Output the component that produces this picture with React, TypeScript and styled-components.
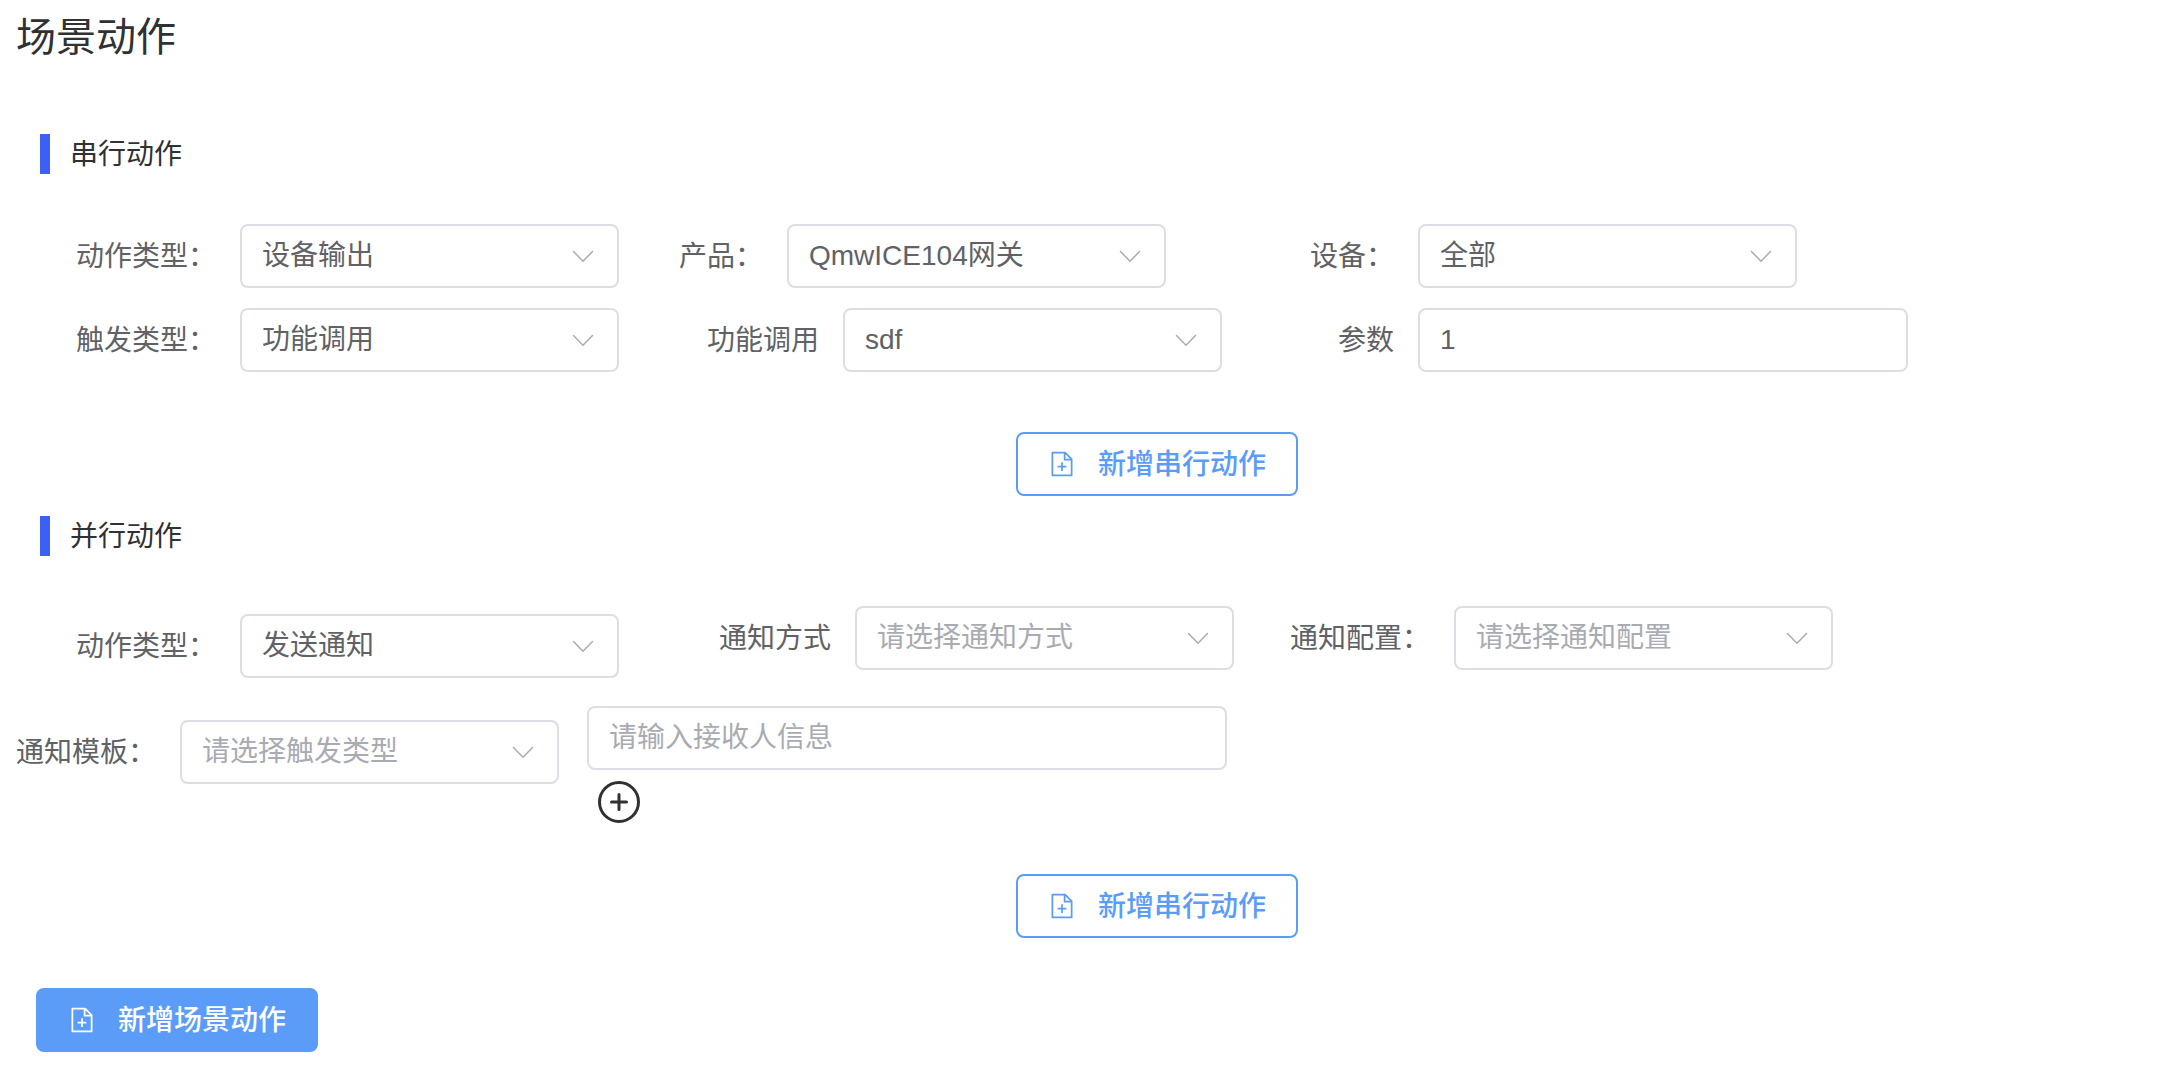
import React, { useId, useState } from 'react';
import styled, { createGlobalStyle, css } from 'styled-components';

const color = {
  heading: '#303133',
  text: '#606266',
  placeholder: '#a8abb2',
  border: '#dcdde5',
  primary: '#5b9cf8',
  marker: '#3c60f4',
};

const GlobalStyle = createGlobalStyle`
  *, *::before, *::after { box-sizing: border-box; }
  body {
    margin: 0;
    background: #fff;
    color: ${color.text};
    font-family: 'Liberation Sans', 'Noto Sans CJK SC', sans-serif;
    font-size: 28px;
    line-height: 40px;
  }
  button, input, select { font: inherit; }
`;

const Page = styled.main`
  padding: 10px 0 28px;
`;

const Title = styled.h1`
  margin: 0;
  padding-left: 16px;
  color: ${color.heading};
  font-size: 40px;
  font-weight: 400;
  line-height: 54px;
`;

const Section = styled.section<{ $top: number }>`
  padding-top: ${(p) => p.$top}px;
`;

const SectionTitle = styled.h2`
  display: flex;
  align-items: flex-start;
  gap: 20px;
  height: 40px;
  margin: 0 0 50px;
  padding-left: 40px;
  color: ${color.heading};
  font-size: 28px;
  font-weight: 400;
  line-height: 42px;

  &::before {
    content: '';
    width: 10px;
    height: 40px;
    background: ${color.marker};
  }
`;

const FieldGrid = styled.div`
  display: grid;
  grid-template-columns: 619fr 631fr 928fr;
  row-gap: 20px;
`;

const FieldRow = styled.div`
  display: flex;
  align-items: flex-start;
  gap: 28px;
  padding-top: 28px;
`;

const Field = styled.div<{ $top?: number }>`
  display: flex;
  align-items: center;
  align-self: start;
  gap: 24px;
  padding-top: ${(p) => p.$top ?? 0}px;
`;

const Label = styled.label<{ $width: number }>`
  flex: none;
  width: ${(p) => p.$width}px;
  padding-top: 2px;
  text-align: right;
  white-space: nowrap;
`;

const control = css`
  height: 64px;
  border: 2px solid ${color.border};
  border-radius: 8px;
  background: #fff;
  color: ${color.text};
  outline: none;

  &:focus-visible {
    border-color: ${color.primary};
  }
`;

const SelectBox = styled.div`
  position: relative;
  width: 379px;
`;

const NativeSelect = styled.select<{ $empty: boolean }>`
  ${control}
  appearance: none;
  display: block;
  width: 100%;
  padding: 0 60px 0 20px;
  color: ${(p) => (p.$empty ? color.placeholder : color.text)};
`;

const Arrow = styled.svg`
  position: absolute;
  top: 18px;
  right: 22px;
  width: 28px;
  height: 28px;
  color: ${color.placeholder};
  pointer-events: none;
`;

const TextInput = styled.input<{ $width: number }>`
  ${control}
  width: ${(p) => p.$width}px;
  padding: 0 20px;

  &::placeholder {
    color: ${color.placeholder};
    opacity: 1;
  }
`;

const Receivers = styled.div`
  display: flex;
  flex-direction: column;
  align-items: flex-start;
  gap: 8px;
`;

const RoundButton = styled.button`
  display: flex;
  margin-left: 8px;
  padding: 0;
  border: 0;
  background: none;
  color: ${color.heading};
  cursor: pointer;
`;

const ButtonRow = styled.div<{ $top: number }>`
  display: flex;
  justify-content: center;
  padding: ${(p) => p.$top}px 0 0 136px;
`;

const Footer = styled.footer`
  padding: 50px 0 0 36px;
`;

const ActionButton = styled.button<{ $filled?: boolean }>`
  display: inline-flex;
  align-items: center;
  gap: 22px;
  height: 64px;
  padding: 0 30px;
  border: 2px solid ${color.primary};
  border-radius: 8px;
  background: ${(p) => (p.$filled ? color.primary : '#fff')};
  color: ${(p) => (p.$filled ? '#fff' : color.primary)};
  font-weight: 500;
  white-space: nowrap;
  cursor: pointer;
`;

const ButtonText = styled.span`
  padding-top: 2px;
`;

const DocumentAddIcon = () => (
  <svg width="28" height="28" viewBox="0 0 1024 1024" fill="currentColor" aria-hidden="true">
    <path d="M832 384H576V128H192v768h640V384zm-26.496-64L640 154.496V320h165.504zM160 64h480l256 256v608a32 32 0 0 1-32 32H160a32 32 0 0 1-32-32V96a32 32 0 0 1 32-32zm320 512V448h64v128h128v64H544v128h-64V640H352v-64h128z" />
  </svg>
);

const CirclePlusIcon = () => (
  <svg width="48" height="48" viewBox="0 0 48 48" fill="none" stroke="currentColor" aria-hidden="true">
    <circle cx="24" cy="24" r="19.5" strokeWidth="3" />
    <path d="M24 16.500v15M16.500 24h15" strokeWidth="3" strokeLinecap="round" />
  </svg>
);

interface SelectFieldProps {
  label: string;
  labelWidth: number;
  value?: string;
  placeholder?: string;
  top?: number;
}

function SelectField({ label, labelWidth, value = '', placeholder, top }: SelectFieldProps) {
  const id = useId();
  const [current, setCurrent] = useState(value);
  return (
    <Field $top={top}>
      <Label htmlFor={id} $width={labelWidth}>{label}</Label>
      <SelectBox>
        <NativeSelect
          id={id}
          value={current}
          $empty={current === ''}
          onChange={(e) => setCurrent(e.target.value)}
        >
          {placeholder && <option value="" disabled>{placeholder}</option>}
          {value && <option value={value}>{value}</option>}
        </NativeSelect>
        <Arrow viewBox="0 0 28 28" fill="none" stroke="currentColor" strokeWidth="1.5" aria-hidden="true">
          <path d="M4.5 9.5 14 19.2l9.5-9.7" strokeLinecap="round" />
        </Arrow>
      </SelectBox>
    </Field>
  );
}

interface AddButtonProps {
  text: string;
  filled?: boolean;
}

const AddButton = ({ text, filled }: AddButtonProps) => (
  <ActionButton type="button" $filled={filled}>
    <DocumentAddIcon />
    <ButtonText>{text}</ButtonText>
  </ActionButton>
);

export default function App() {
  const paramId = useId();
  return (
    <>
      <GlobalStyle />
      <Page>
        <Title>场景动作</Title>

        <Section $top={70}>
          <SectionTitle>串行动作</SectionTitle>
          <FieldGrid>
            <SelectField label="动作类型：" labelWidth={216} value="设备输出" />
            <SelectField label="产品：" labelWidth={144} value="QmwICE104网关" />
            <SelectField label="设备：" labelWidth={144} value="全部" />
            <SelectField label="触发类型：" labelWidth={216} value="功能调用" />
            <SelectField label="功能调用" labelWidth={200} value="sdf" />
            <Field>
              <Label htmlFor={paramId} $width={144}>参数</Label>
              <TextInput id={paramId} $width={490} defaultValue="1" />
            </Field>
          </FieldGrid>
          <ButtonRow $top={60}>
            <AddButton text="新增串行动作" />
          </ButtonRow>
        </Section>

        <Section $top={20}>
          <SectionTitle>并行动作</SectionTitle>
          <FieldGrid>
            <SelectField label="动作类型：" labelWidth={216} value="发送通知" top={8} />
            <SelectField label="通知方式" labelWidth={212} placeholder="请选择通知方式" />
            <SelectField label="通知配置：" labelWidth={180} placeholder="请选择通知配置" />
          </FieldGrid>
          <FieldRow>
            <SelectField label="通知模板：" labelWidth={156} placeholder="请选择触发类型" top={14} />
            <Receivers>
              <TextInput $width={640} placeholder="请输入接收人信息" aria-label="接收人信息" />
              <RoundButton type="button" aria-label="添加接收人"><CirclePlusIcon /></RoundButton>
            </Receivers>
          </FieldRow>
          <ButtonRow $top={48}>
            <AddButton text="新增串行动作" />
          </ButtonRow>
        </Section>

        <Footer>
          <AddButton text="新增场景动作" filled />
        </Footer>
      </Page>
    </>
  );
}
